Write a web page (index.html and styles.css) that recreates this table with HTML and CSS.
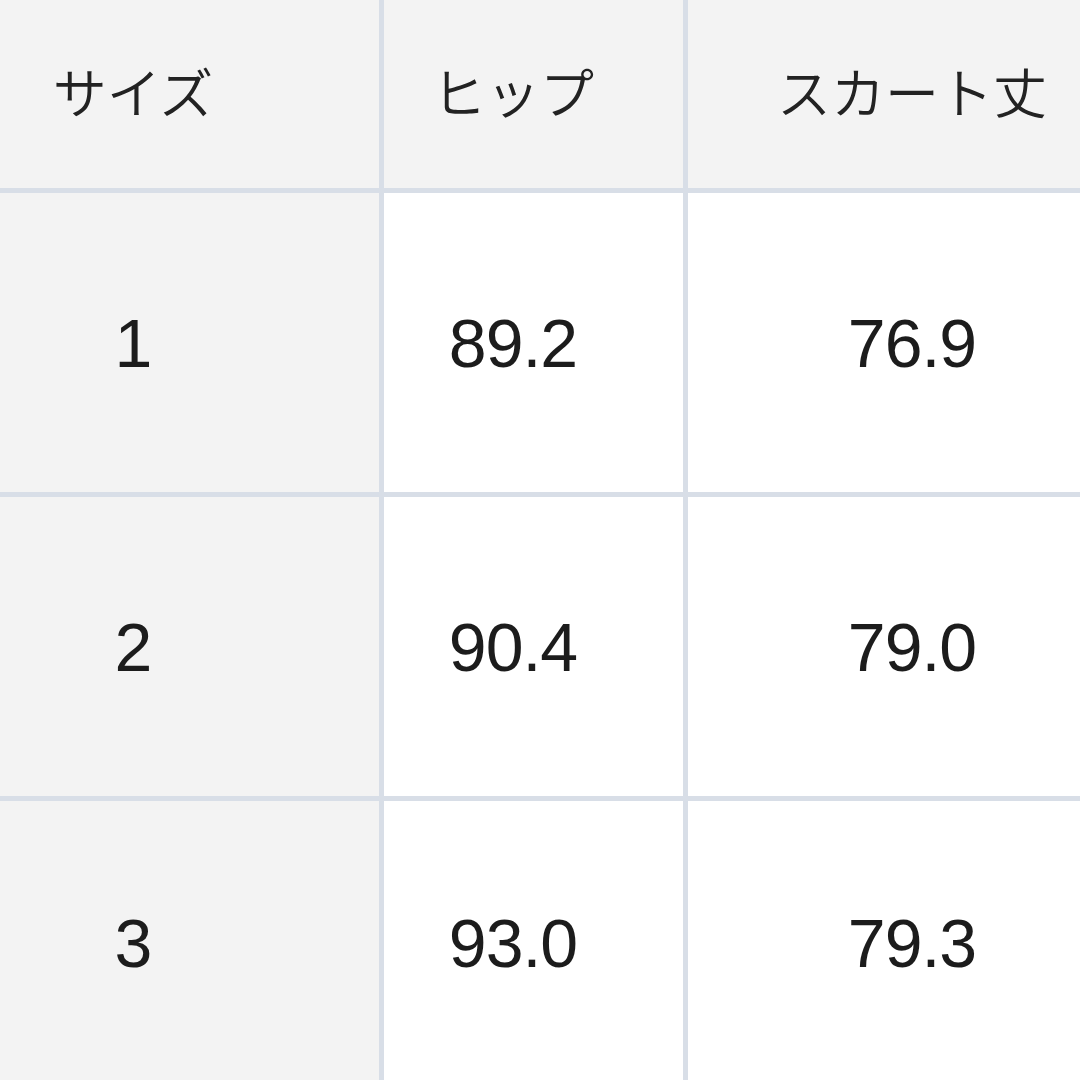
FILE: index.html
```html
<!DOCTYPE html>
<html lang="ja">
<head>
<meta charset="utf-8">
<link rel="stylesheet" href="styles.css">
</head>
<body>
<div class="table">
  <div class="cell head c1">サイズ</div>
  <div class="cell head c2">ヒップ</div>
  <div class="cell head c3">スカート丈</div>

  <div class="cell side c1 num">1</div>
  <div class="cell c2 num">89.2</div>
  <div class="cell c3 num">76.9</div>

  <div class="cell side c1 num">2</div>
  <div class="cell c2 num">90.4</div>
  <div class="cell c3 num">79.0</div>

  <div class="cell side c1 num">3</div>
  <div class="cell c2 num">93.0</div>
  <div class="cell c3 num">79.3</div>
</div>
</body>
</html>
```
FILE: styles.css
```css
html, body {
  margin: 0;
  padding: 0;
  width: 1080px;
  height: 1080px;
  overflow: hidden;
  background: #ffffff;
}

.table {
  display: grid;
  grid-template-columns: 379px 299px 1fr;
  grid-template-rows: 188px 299px 299px 1fr;
  gap: 5px;
  background: #d8dee7;
  width: 1080px;
  height: 1085px;
  font-family: "Liberation Sans", "Noto Sans CJK JP", sans-serif;
  color: #1c1c1c;
}

.cell {
  background: #ffffff;
  display: flex;
  align-items: center;
  justify-content: center;
}

.head {
  background: #f3f3f3;
  font-family: "Noto Sans CJK JP", sans-serif;
  font-size: 54px;
  font-weight: 350;
  color: #222222;
  padding-bottom: 8px;
  box-sizing: border-box;
}

.side {
  background: #f3f3f3;
}

.num {
  font-size: 68px;
  letter-spacing: -1px;
}

.c1 {
  padding-right: 113px;
}

.c2 {
  padding-right: 41px;
}

.c3 {
  padding-left: 56px;
}
```
